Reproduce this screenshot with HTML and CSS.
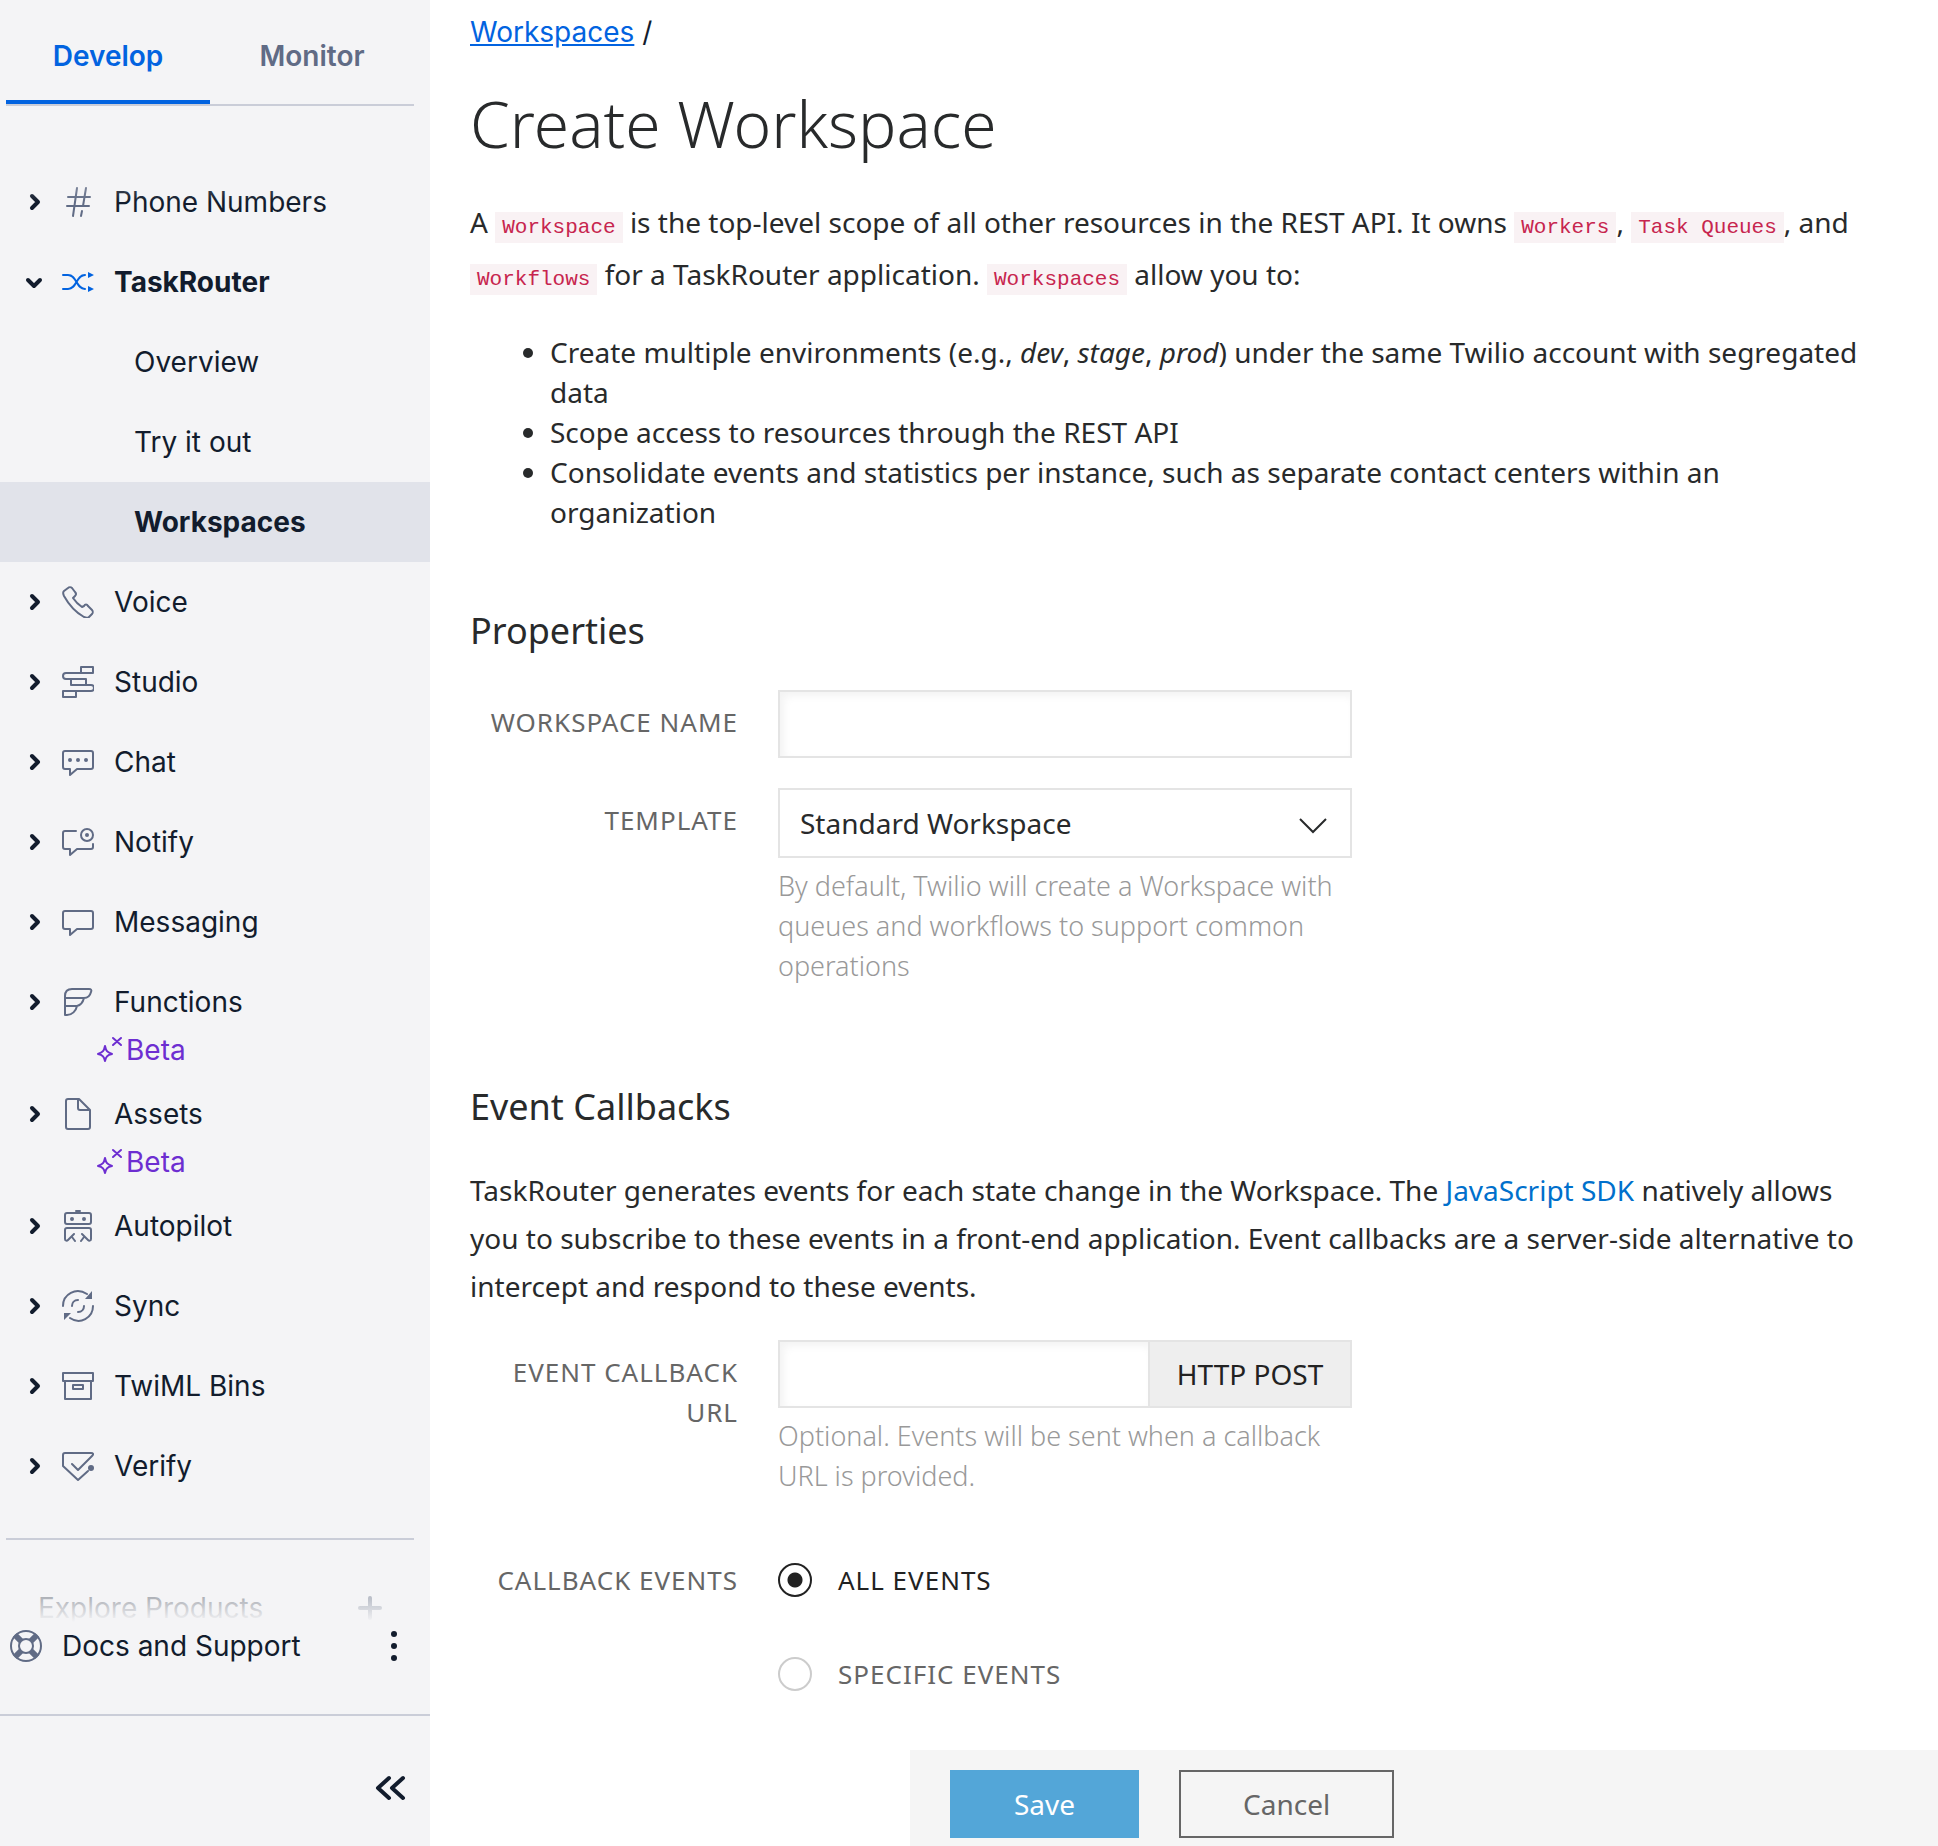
FILE: index.html
```html
<!DOCTYPE html>
<html lang="en">
<head>
<meta charset="utf-8">
<title>Create Workspace</title>
<meta name="viewport" content="width=device-width, initial-scale=1">
<link rel="stylesheet" href="styles.css">
</head>
<body>
<svg class="defs" aria-hidden="true">
  <symbol id="chevron" viewBox="0 0 16 20"><path d="M6 4l6 6-6 6" fill="none" stroke="currentColor" stroke-width="4" stroke-linecap="round" stroke-linejoin="round"/></symbol>
  <symbol id="bubble" viewBox="0 0 32 32"><path d="M3 5h26a2 2 0 0 1 2 2v14a2 2 0 0 1-2 2H15l-7 6v-6H3a2 2 0 0 1-2-2V7a2 2 0 0 1 2-2z"/></symbol>
  <symbol id="beta" viewBox="0 0 30 28"><path d="M9 10c1 5 2 6 7 8-5 1-6 3-7 7-1-4-2-6-7-7 5-2 6-3 7-8zM17 2l8 7M25 2l-8 7" fill="none" stroke="currentColor" stroke-width="2" stroke-linecap="round" stroke-linejoin="round"/></symbol>
</svg>
<div class="app">
  <aside class="sidebar">
    <div class="tabs" role="tablist">
      <button class="tab tab-active" type="button" role="tab" aria-selected="true">Develop</button>
      <button class="tab" type="button" role="tab" aria-selected="false">Monitor</button>
    </div>
    <nav class="nav">
      <a class="item" href="#"><svg class="chev"><use href="#chevron"/></svg><svg class="icon" viewBox="0 0 32 32"><path d="M6 11h22M5 20h22M15 2l-4 28M24 2l-3 18M20 25l-1 5"/></svg><span>Phone Numbers</span></a>
      <a class="item item-open" href="#"><svg class="chev chev-down"><use href="#chevron"/></svg><svg class="icon icon-active" viewBox="0 0 32 32"><path d="M1 9h5c9 0 8 14 17 14M1 23h5c9 0 8-14 17-14"/><path class="solid" d="M26 6l6 3-6 3zM26 20l6 3-6 3z"/></svg><span>TaskRouter</span></a>
      <a class="subitem" href="#">Overview</a>
      <a class="subitem" href="#">Try it out</a>
      <a class="subitem subitem-active" href="#">Workspaces</a>
      <a class="item" href="#"><svg class="chev"><use href="#chevron"/></svg><svg class="icon" viewBox="0 0 32 32"><path d="M6 2L2 5c-1 1-1 3 0 5 5 9 11 16 20 21 2 1 4 1 5 0l3-3c1-1 1-3 0-4l-4-4c-1-2-3-2-4 0l-2 1c-3-2-7-6-9-9l2-2c2-2 1-3 0-4L10 2C9 1 7 1 6 2z"/></svg><span>Voice</span></a>
      <a class="item" href="#"><svg class="chev"><use href="#chevron"/></svg><svg class="icon" viewBox="0 0 32 32"><path d="M19 1h12v6H4c-4 0-4 6 0 6h20v6M19 1v6M9 13v6h20c4 0 4 6 0 6H1v6h13v-6"/></svg><span>Studio</span></a>
      <a class="item" href="#"><svg class="chev"><use href="#chevron"/></svg><svg class="icon" viewBox="0 0 32 32"><use href="#bubble"/><path class="solid" d="M6 14a2 2 0 1 0 4 0a2 2 0 1 0-4 0M14 14a2 2 0 1 0 4 0a2 2 0 1 0-4 0M22 14a2 2 0 1 0 4 0a2 2 0 1 0-4 0"/></svg><span>Chat</span></a>
      <a class="item" href="#"><svg class="chev"><use href="#chevron"/></svg><svg class="icon" viewBox="0 0 32 32"><path d="M14 5H3a2 2 0 0 0-2 2v14a2 2 0 0 0 2 2h5v6l7-6h14a2 2 0 0 0 2-2v-3"/><circle cx="25" cy="9" r="6"/><circle class="solid" cx="25" cy="9" r="2"/></svg><span>Notify</span></a>
      <a class="item" href="#"><svg class="chev"><use href="#chevron"/></svg><svg class="icon" viewBox="0 0 32 32"><use href="#bubble"/></svg><span>Messaging</span></a>
      <a class="item" href="#"><svg class="chev"><use href="#chevron"/></svg><svg class="icon" viewBox="0 0 32 32"><path d="M3 29V10c0-5 3-7 7-7h17c2 0 3 1 2 3-1 4-4 6-7 6-1 4-3 7-7 8-1 5-5 9-10 9zM3 12h19M3 20h12"/></svg><span>Functions</span></a>
      <div class="beta"><svg class="beta-icon"><use href="#beta"/></svg>Beta</div>
      <a class="item" href="#"><svg class="chev"><use href="#chevron"/></svg><svg class="icon" viewBox="0 0 32 32"><path d="M6 1h11l11 11v17a2 2 0 0 1-2 2H6a2 2 0 0 1-2-2V3a2 2 0 0 1 2-2zM16 1v9a2 2 0 0 0 2 2h10"/></svg><span>Assets</span></a>
      <div class="beta"><svg class="beta-icon"><use href="#beta"/></svg>Beta</div>
      <a class="item" href="#"><svg class="chev"><use href="#chevron"/></svg><svg class="icon" viewBox="0 0 32 32"><rect x="3" y="3" width="26" height="11" rx="2"/><path d="M14 1h4M12 24l-6 6c-1 1-3 1-3-1V20a2 2 0 0 1 2-2h22a2 2 0 0 1 2 2v9c0 2-2 2-3 1l-6-6M10 27l3 4M22 27l-3 4"/><path class="solid" d="M8 9a2 2 0 1 0 4 0a2 2 0 1 0-4 0M20 9a2 2 0 1 0 4 0a2 2 0 1 0-4 0"/></svg><span>Autopilot</span></a>
      <a class="item" href="#"><svg class="chev"><use href="#chevron"/></svg><svg class="icon" viewBox="0 0 32 32"><path d="M1 16C1 4 14-3 25 4M31 16c0 12-13 19-23 12M10 16c0-3 2-6 6-6M22 16c0 3-2 6-6 6"/><path class="solid" d="M30 1v8h-7zM2 30v-7h7z"/></svg><span>Sync</span></a>
      <a class="item" href="#"><svg class="chev"><use href="#chevron"/></svg><svg class="icon" viewBox="0 0 32 32"><path d="M1 3h30v8H1zM3 11v18h26V11M11 15h10v4H11z"/></svg><span>TwiML Bins</span></a>
      <a class="item" href="#"><svg class="chev"><use href="#chevron"/></svg><svg class="icon" viewBox="0 0 32 32"><path d="M26 21L16 30 1 16V5a2 2 0 0 1 2-2h26c2 0 3 1 1 3L16 20l-6-6"/><circle class="solid" cx="29" cy="18" r="3"/></svg><span>Verify</span></a>
      <button class="explore" type="button"><span>Explore Products</span><svg class="plus" viewBox="0 0 24 24"><path d="M12 2v20M2 12h20"/></svg></button>
    </nav>
    <div class="support">
      <svg class="icon" viewBox="0 0 32 32"><circle cx="16" cy="16" r="15"/><circle cx="16" cy="16" r="7"/><path class="spokes" d="M5 5l6 6M27 5l-6 6M5 27l6-6M27 27l-6-6"/></svg>
      <a class="support-link" href="#">Docs and Support</a>
      <button class="bare" type="button" aria-label="More options"><svg class="more" viewBox="0 0 8 32"><circle cx="4" cy="4" r="3"/><circle cx="4" cy="16" r="3"/><circle cx="4" cy="28" r="3"/></svg></button>
    </div>
    <div class="collapse">
      <button class="bare" type="button" aria-label="Collapse navigation"><svg class="double" viewBox="0 0 32 28"><path d="M15 4L4 14l11 10M29 4L18 14l11 10"/></svg></button>
    </div>
  </aside>

  <main class="main">
    <form class="content" id="workspace-form">
      <div class="crumbs"><a href="#">Workspaces</a> /</div>
      <h1>Create Workspace</h1>
      <p class="intro">A <code>Workspace</code> is the top-level scope of all other resources in the REST API. It owns <code>Workers</code>, <code>Task Queues</code>, and <code>Workflows</code> for a TaskRouter application. <code>Workspaces</code> allow you to:</p>
      <ul>
        <li>Create multiple environments (e.g., <em>dev</em>, <em>stage</em>, <em>prod</em>) under the same Twilio account with segregated data</li>
        <li>Scope access to resources through the REST API</li>
        <li>Consolidate events and statistics per instance, such as separate contact centers within an organization</li>
      </ul>

      <h2>Properties</h2>
      <div class="row">
        <label class="label" for="name">Workspace Name</label>
        <input class="box" id="name" type="text">
      </div>
      <div class="row">
        <label class="label" for="template">Template</label>
        <div>
          <select class="box select" id="template"><option>Standard Workspace</option></select>
          <p class="help">By default, Twilio will create a Workspace with queues and workflows to support common operations</p>
        </div>
      </div>

      <h2 class="second">Event Callbacks</h2>
      <p class="about">TaskRouter generates events for each state change in the Workspace. The <a href="#">JavaScript SDK</a> natively allows you to subscribe to these events in a front-end application. Event callbacks are a server-side alternative to intercept and respond to these events.</p>
      <div class="row">
        <label class="label" for="url">Event Callback URL</label>
        <div>
          <div class="group">
            <input class="box" id="url" type="text">
            <span class="addon">HTTP POST</span>
          </div>
          <p class="help">Optional. Events will be sent when a callback URL is provided.</p>
        </div>
      </div>
      <div class="row events" role="radiogroup" aria-labelledby="events-label">
        <span class="label" id="events-label">Callback Events</span>
        <div class="radios">
          <label class="radio"><input type="radio" name="events" checked><span>All Events</span></label>
          <label class="radio"><input type="radio" name="events"><span>Specific Events</span></label>
        </div>
      </div>
    </form>
    <div class="actions">
      <button class="btn btn-save" type="submit" form="workspace-form">Save</button>
      <button class="btn btn-cancel" type="button">Cancel</button>
    </div>
  </main>
</div>
</body>
</html>
```

FILE: styles.css
```css
* { box-sizing: border-box; }

body {
  margin: 0;
  background: #fff;
  color: #282a2b;
  font: 28px/40px "Noto Sans", "Open Sans", sans-serif;
}

button, input, select { font: inherit; color: inherit; }
a { text-decoration: none; }
p, h1, h2, ul { margin: 0; }
.defs { display: none; }

.app { display: flex; height: 100vh; }

/* Sidebar */
.sidebar {
  flex: 0 0 430px;
  display: flex;
  flex-direction: column;
  background: #f4f4f6;
  color: #121c2d;
  font: 28px/40px Inter, sans-serif;
}

.tabs {
  display: flex;
  margin: 0 16px 0 6px;
  border-bottom: 2px solid #cacdd8;
}

.tab {
  flex: 1;
  height: 104px;
  padding: 12px 0 0;
  border: 0;
  border-bottom: 4px solid transparent;
  background: none;
  color: #606b85;
  font-weight: 600;
}

.tab-active { color: #0263e0; border-color: #0263e0; }

.nav {
  position: relative;
  flex: 1;
  min-height: 0;
  overflow: hidden;
  padding-top: 56px;
}

.nav::before, .nav::after {
  content: "";
  position: absolute;
  left: 0;
  right: 0;
  height: 80px;
  pointer-events: none;
}
.nav::before { top: 16px; background: linear-gradient(#f4f4f6, #f4f4f600); }
.nav::after { bottom: 0; background: linear-gradient(#f4f4f600, #f4f4f6); }

.item, .subitem {
  display: flex;
  align-items: center;
  height: 80px;
  color: inherit;
}
.item { padding-left: 26px; }
.item-open, .subitem-active { font-weight: 700; }
.subitem { padding-left: 134px; }
.subitem-active { background: #e1e3ea; }

.chev { width: 16px; height: 20px; margin-right: 20px; }
.chev-down { transform: rotate(90deg); }

.icon {
  flex: none;
  width: 32px;
  height: 32px;
  margin-right: 20px;
  fill: none;
  stroke: #606b85;
  stroke-width: 2;
  stroke-linecap: round;
  stroke-linejoin: round;
  color: #606b85;
}
.icon-active { stroke: #0263e0; color: #0263e0; }
.solid { fill: currentColor; stroke: none; }
.spokes { stroke-width: 6; stroke-linecap: butt; }

.beta {
  display: flex;
  align-items: center;
  height: 32px;
  padding-left: 96px;
  color: #6d2ed1;
  line-height: 32px;
  margin-top: -8px;
  margin-bottom: 8px;
}
.beta-icon { width: 30px; height: 28px; }

.explore {
  display: flex;
  align-items: center;
  justify-content: space-between;
  width: calc(100% - 22px);
  height: 138px;
  margin: 32px 16px 0 6px;
  padding: 0 32px;
  border: 0;
  border-top: 2px solid #cacdd8;
  background: none;
}
.plus { width: 24px; height: 24px; fill: none; stroke: #394762; stroke-width: 4; stroke-linecap: round; }

.support {
  display: flex;
  align-items: center;
  height: 94px;
  padding: 0 32px 44px 10px;
  border-bottom: 2px solid #cacdd8;
}
.support-link { flex: 1; color: inherit; }
.bare { display: flex; padding: 0; border: 0; background: none; }
.more { width: 8px; height: 32px; fill: #121c2d; }

.collapse {
  display: flex;
  align-items: center;
  justify-content: flex-end;
  height: 130px;
  padding: 14px 24px 0 0;
}
.double { width: 32px; height: 28px; fill: none; stroke: #121c2d; stroke-width: 4; stroke-linecap: round; stroke-linejoin: round; }

/* Main */
.main {
  flex: 1;
  min-width: 0;
  display: flex;
  flex-direction: column;
}

.content {
  flex: 1;
  min-height: 0;
  overflow-y: auto;
  padding: 12px 56px 0 40px;
}

.crumbs { font: 28px/40px Inter, sans-serif; color: #121c2d; }
.crumbs a { color: #0263e0; text-decoration: underline; }

h1 { margin-top: 32px; font-size: 64px; font-weight: 300; line-height: 80px; }

.intro { margin-top: 32px; line-height: 52px; }
code {
  padding: 4px 7px;
  background: #f9f2f4;
  color: #c7254e;
  font: 21px/24px "Liberation Mono", monospace;
}

ul { margin-top: 32px; padding-left: 80px; }

h2 { margin-top: 72px; font-size: 36px; font-weight: 400; line-height: 54px; }
h2.second { margin-top: 94px; }

.row {
  display: grid;
  grid-template-columns: 268px 574px;
  column-gap: 40px;
  margin-top: 32px;
}
.row + .row, .about + .row { margin-top: 30px; }

.label {
  padding-top: 12px;
  color: #666;
  font-size: 26px;
  letter-spacing: 1px;
  text-align: right;
  text-transform: uppercase;
}

.box {
  display: block;
  width: 100%;
  height: 68px;
  padding: 0 20px;
  border: 2px solid #e4e4e4;
  border-radius: 0;
  background: #fff;
  box-shadow: inset 4px 4px 8px #0000000d;
}

.select {
  height: 70px;
  appearance: none;
  box-shadow: none;
  background: #fff url("data:image/svg+xml,%3Csvg xmlns='http://www.w3.org/2000/svg' width='28' height='16'%3E%3Cpath d='M1 1l13 13L27 1' fill='none' stroke='%23282a2b' stroke-width='2'/%3E%3C/svg%3E") no-repeat right 23px top 28px;
}

.help { margin-top: 8px; color: #999; font-size: 27px; font-weight: 300; }

.about { margin-top: 32px; line-height: 48px; }
.about a { color: #0070cc; }

.group { display: flex; }
.group .box { flex: 1; min-width: 0; border-right-width: 0; }
.addon {
  flex: 0 0 204px;
  border: 2px solid #e4e4e4;
  background: #eee;
  color: #222;
  line-height: 64px;
  text-align: center;
}

.row + .events { margin-top: 52px; }
.radios { display: grid; row-gap: 54px; padding-top: 12px; }
.radio {
  display: flex;
  align-items: center;
  gap: 26px;
  color: #666;
  font-size: 26px;
  letter-spacing: 1px;
  text-transform: uppercase;
}
.radio:has(:checked) { color: #222; }
.radio input {
  appearance: none;
  width: 34px;
  height: 34px;
  margin: 0;
  border: 2px solid #ccc;
  border-radius: 50%;
}
.radio input:checked { border-color: #222; background: radial-gradient(circle, #222 7px, #fff 8px); }

.actions {
  display: flex;
  gap: 40px;
  margin-left: 480px;
  padding: 20px 40px 8px;
  background: #f5f5f5;
}
.btn { height: 68px; padding: 0 62px; border: 2px solid #666; background: none; color: #666; }
.btn-save { border-color: #53a6d8; background: #53a6d8; color: #fff; }
```
